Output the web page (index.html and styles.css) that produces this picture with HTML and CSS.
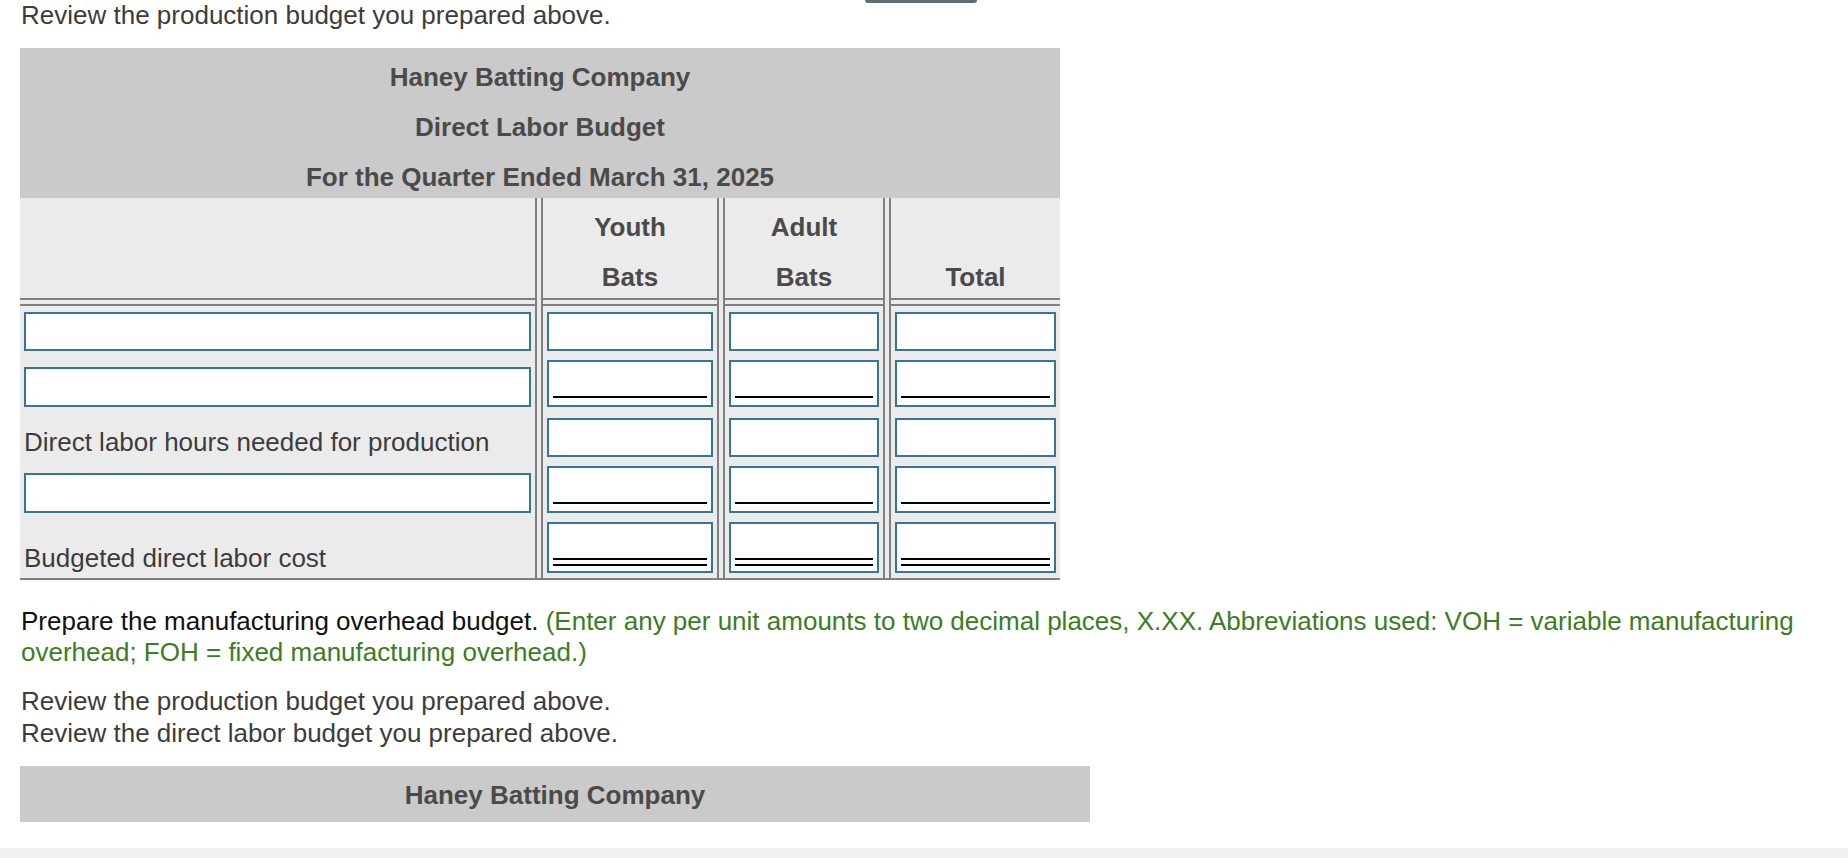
FILE: index.html
```html
<!DOCTYPE html>
<html lang="en">
<head>
<meta charset="utf-8">
<title>Direct Labor Budget</title>
<link rel="stylesheet" href="styles.css">
</head>
<body>
<div class="page">
  <div class="intro">
    <p class="note first">Review the production budget you prepared above.</p>
    <div class="cut-btn"></div>
  </div>

  <div class="budget">
    <div class="budget-title">
      <div>Haney Batting Company</div>
      <div>Direct Labor Budget</div>
      <div>For the Quarter Ended March 31, 2025</div>
    </div>
    <div class="grid-wrap">
      <table class="grid">
        <thead>
          <tr class="head">
            <th class="c1"></th>
            <th class="c2"><div class="hd"><div class="hd-in">Youth<br>Bats</div></div></th>
            <th class="c3"><div class="hd"><div class="hd-in">Adult<br>Bats</div></div></th>
            <th class="c4"><div class="hd"><div class="hd-in">Total</div></div></th>
          </tr>
        </thead>
        <tbody>
          <tr class="spacer">
            <td class="c1"></td><td class="c2"></td><td class="c3"></td><td class="c4"></td>
          </tr>
          <tr class="row r1">
            <td class="c1"><div class="field"></div></td>
            <td class="c2"><div class="field"></div></td>
            <td class="c3"><div class="field"></div></td>
            <td class="c4"><div class="field"></div></td>
          </tr>
          <tr class="row r2">
            <td class="c1"><div class="field wide"></div></td>
            <td class="c2"><div class="field single"><span class="line"></span></div></td>
            <td class="c3"><div class="field single"><span class="line"></span></div></td>
            <td class="c4"><div class="field single"><span class="line"></span></div></td>
          </tr>
          <tr class="row r3">
            <td class="c1 label">Direct labor hours needed for production</td>
            <td class="c2"><div class="field"></div></td>
            <td class="c3"><div class="field"></div></td>
            <td class="c4"><div class="field"></div></td>
          </tr>
          <tr class="row r4">
            <td class="c1"><div class="field wide"></div></td>
            <td class="c2"><div class="field single"><span class="line"></span></div></td>
            <td class="c3"><div class="field single"><span class="line"></span></div></td>
            <td class="c4"><div class="field single"><span class="line"></span></div></td>
          </tr>
          <tr class="row r5">
            <td class="c1 label">Budgeted direct labor cost</td>
            <td class="c2"><div class="field double"><span class="line dbl"></span></div></td>
            <td class="c3"><div class="field double"><span class="line dbl"></span></div></td>
            <td class="c4"><div class="field double"><span class="line dbl"></span></div></td>
          </tr>
        </tbody>
      </table>
    </div>
  </div>

  <p class="prepare">Prepare the manufacturing overhead budget. <span class="hint">(Enter any per unit amounts to two decimal places, X.XX. Abbreviations used: VOH = variable manufacturing overhead; FOH = fixed manufacturing overhead.)</span></p>

  <div class="review">
    <p class="note">Review the production budget you prepared above.</p>
    <p class="note">Review the direct labor budget you prepared above.</p>
  </div>

  <div class="next-box">Haney Batting Company</div>
</div>
<div class="footer-band"></div>
</body>
</html>
```

FILE: styles.css
```css
html, body {
  margin: 0;
  padding: 0;
  background: #ffffff;
  overflow: hidden;
}

body {
  font-family: "Liberation Sans", Arial, Helvetica, sans-serif;
  font-size: 26px;
  color: #3c3c3c;
}

.page {
  padding: 0 20px;
}

p {
  margin: 0;
}

.intro {
  display: flex;
  align-items: flex-start;
  height: 30px;
}

.intro .note {
  width: 844px;
  line-height: 30px;
  padding-left: 1px;
}

.cut-btn {
  width: 112px;
  height: 3px;
  background: #5f6a77;
  border-radius: 0 0 6px 6px;
}

.budget {
  margin-top: 18px;
  width: 1040px;
}

.budget-title {
  box-sizing: border-box;
  height: 150px;
  padding-top: 4px;
  background: #cacaca;
  color: #4a4a4a;
  font-weight: bold;
  text-align: center;
  line-height: 50px;
}

.grid-wrap {
  background: #ebebeb;
  overflow: hidden;
  border-bottom: 2px solid #808080;
}

.grid {
  border-collapse: separate;
  border-spacing: 4px 0;
  margin: 0 -4px;
  width: 1048px;
  table-layout: fixed;
}

.grid th,
.grid td {
  box-sizing: border-box;
  padding: 0;
}

.grid .c1 { width: 517px; border-right: 2px solid #808080; }
.grid .c2 { width: 178px; border-left: 2px solid #808080; border-right: 2px solid #808080; }
.grid .c3 { width: 162px; border-left: 2px solid #808080; border-right: 2px solid #808080; }
.grid .c4 { width: 171px; border-left: 2px solid #808080; }

.head th {
  height: 102px;
  border-bottom: 2px solid #808080;
  color: #4a4a4a;
  font-weight: bold;
  text-align: center;
  vertical-align: top;
}

.hd {
  height: 100px;
  display: flex;
  flex-direction: column;
  justify-content: flex-end;
}

.hd-in {
  line-height: 50px;
  margin-bottom: -4px;
}

.spacer td {
  height: 4px;
  font-size: 0;
  line-height: 0;
}

.row td {
  vertical-align: bottom;
  padding: 0 4px 5px 4px;
}

.r1 td { height: 52px; border-top: 2px solid #808080; }
.r2 td { height: 56px; }
.r3 td { height: 50px; }
.r4 td { height: 56px; }
.r5 td { height: 60px; }

.label {
  line-height: 30px;
  color: #3c3c3c;
  white-space: nowrap;
}

.field {
  box-sizing: border-box;
  height: 39px;
  border: 2px solid #357596;
  background: #ffffff;
  display: flex;
  flex-direction: column;
  justify-content: flex-end;
  padding: 0 4px 7px 4px;
}

.field.wide {
  height: 40px;
}

.field.single {
  height: 47px;
}

.field.double {
  height: 51px;
  padding-bottom: 5px;
}

.line {
  display: block;
  border-top: 2px solid #000000;
}

.line.dbl {
  height: 4px;
  border-bottom: 2px solid #000000;
}

.prepare {
  margin-top: 26px;
  line-height: 31px;
  color: #111111;
  padding-left: 1px;
}

.hint {
  color: #3b7d22;
}

.review {
  margin-top: 17px;
  line-height: 32px;
  padding-left: 1px;
}

.next-box {
  margin-top: 17px;
  width: 1070px;
  height: 56px;
  box-sizing: border-box;
  padding-top: 5px;
  line-height: 48px;
  background: #cacaca;
  color: #4a4a4a;
  font-weight: bold;
  text-align: center;
}

.footer-band {
  margin-top: 26px;
  height: 10px;
  background: #f1f1f1;
}
```
